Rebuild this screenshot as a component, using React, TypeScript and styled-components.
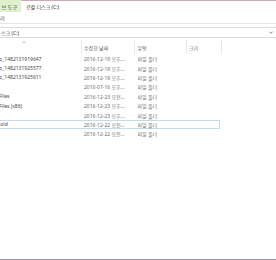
import React from "react";
import styled, { createGlobalStyle } from "styled-components";

const Global = createGlobalStyle`
  html, body { margin: 0; padding: 0; background: #ffffff; }
  body { font-family: "Noto Sans", "Noto Sans CJK KR", sans-serif; }
`;

const Window = styled.div`
  width: 276px;
  height: 260px;
  box-sizing: border-box;
  display: flex;
  flex-direction: column;
  background: #ffffff;
  border-bottom: 1px solid #a594a6;
  overflow: hidden;
  font-size: 5px;
  color: #444;
`;

const TitleRow = styled.div`
  display: flex;
  height: 12px;
  flex: none;
`;

const ContextTab = styled.div`
  width: 21px;
  background: #dff0cf;
  display: flex;
  align-items: center;
  justify-content: flex-end;
  gap: 1.5px;
  padding-right: 4px;
  box-sizing: border-box;
  white-space: nowrap;
  color: #2f3b26;
`;

const TitleBar = styled.div`
  flex: 1;
  border-top: 1px solid #c8aabb;
  display: flex;
  align-items: center;
  padding-left: 5px;
  white-space: nowrap;
  color: #2b2b2b;
`;

const RibbonTabs = styled.div`
  height: 11px;
  flex: none;
  border-bottom: 1px solid #e6e6e6;
  display: flex;
  align-items: center;
  color: #333;
`;

const AddressBar = styled.div`
  height: 9px;
  flex: none;
  margin: 3px -4px 2px -2px;
  border: 1px solid #dadada;
  display: flex;
  align-items: center;
  justify-content: space-between;
  padding: 0 6px 0 2px;
  color: #333;
`;

const Chevron = styled.svg`
  width: 4px;
  height: 3px;
  flex: none;
`;

const cols = "81.5px 53.5px 51.5px 35.5px 1fr";

const Header = styled.div`
  height: 14px;
  flex: none;
  display: grid;
  grid-template-columns: ${cols};
  color: #5b5b5b;
`;

const HeadCell = styled.div<{ $last?: boolean }>`
  border-right: ${(p) => (p.$last ? "none" : "1px solid #e8e8e8")};
  display: flex;
  align-items: center;
  padding-left: 2.5px;
  white-space: nowrap;
  position: relative;
`;

const SortArrow = styled.svg`
  position: absolute;
  left: 21.5px;
  top: 1px;
  width: 4px;
  height: 3px;
`;

const List = styled.div`
  display: flex;
  flex-direction: column;
  width: 222px;
`;

const Row = styled.div<{ $focused?: boolean }>`
  height: 9.4px;
  box-sizing: border-box;
  margin-left: -2px;
  padding-left: 2px;
  width: 222px;
  display: grid;
  grid-template-columns: 81.5px 53.5px 51.5px 1fr;
  align-items: center;
  border: 1px solid ${(p) => (p.$focused ? "#c4dce6" : "transparent")};
  border-left: none;
  white-space: nowrap;
`;

const NameCell = styled.div`
  color: #474747;
  overflow: hidden;
  margin-left: -1px;
`;

const DateCell = styled.div`
  color: #707070;
  padding-left: 2.5px;
`;

const TypeCell = styled.div`
  color: #707070;
  padding-left: 2.5px;
`;

const rows = [
  { name: "p_1482131919647", date: "2016-12-19 오후..." },
  { name: "p_1482131925577", date: "2016-12-19 오후..." },
  { name: "p_1482131925611", date: "2016-12-19 오후..." },
  { name: "", date: "2016-07-16 오후..." },
  { name: "Files", date: "2016-12-23 오전..." },
  { name: "Files (x86)", date: "2016-12-23 오후..." },
  { name: "", date: "2016-12-23 오후..." },
  { name: ".old", date: "2016-12-22 오전...", focused: true },
  { name: "", date: "2016-12-22 오전..." },
];

export default function App() {
  return (
    <>
      <Global />
      <Window>
        <TitleRow>
          <ContextTab>
            <span>브</span>
            <span>도구</span>
          </ContextTab>
          <TitleBar>로컬 디스크 (C:)</TitleBar>
        </TitleRow>
        <RibbonTabs>리</RibbonTabs>
        <AddressBar>
          <span>스크 (C:)</span>
          <Chevron viewBox="0 0 4 3">
            <path d="M0.3 0.6 L2 2.3 L3.7 0.6" fill="none" stroke="#555" strokeWidth="0.7" />
          </Chevron>
        </AddressBar>
        <Header>
          <HeadCell>
            <SortArrow viewBox="0 0 4 3">
              <path d="M0.3 2.4 L2 0.7 L3.7 2.4" fill="none" stroke="#8a8a8a" strokeWidth="0.6" />
            </SortArrow>
          </HeadCell>
          <HeadCell>수정한 날짜</HeadCell>
          <HeadCell>유형</HeadCell>
          <HeadCell>크기</HeadCell>
          <HeadCell $last />
        </Header>
        <List>
          {rows.map((r, i) => (
            <Row key={i} $focused={r.focused}>
              <NameCell>{r.name}</NameCell>
              <DateCell>{r.date}</DateCell>
              <TypeCell>파일 폴더</TypeCell>
              <div />
            </Row>
          ))}
        </List>
      </Window>
    </>
  );
}
